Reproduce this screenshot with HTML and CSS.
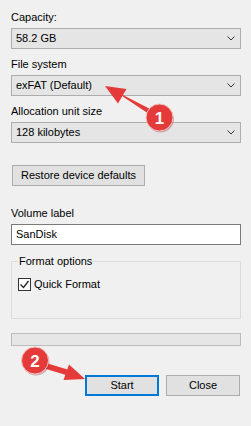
FILE: index.html
```html
<!DOCTYPE html>
<html>
	<head>
		<meta charset="UTF-8">
		<title>Format</title>
		<link rel="stylesheet" href="styles.css">
	</head>
	<body>
		<div class="dialog">
			<div class="field">
				<div class="lbl">Capacity:</div>
				<div class="combo">
					<span>58.2 GB</span>
					<svg class="chev" width="8" height="5" viewBox="0 0 8 5"><polyline points="0.5,0.5 4,4 7.5,0.5" fill="none" stroke="#333" stroke-width="1"/></svg>
				</div>
			</div>
			<div class="field">
				<div class="lbl">File system</div>
				<div class="combo">
					<span>exFAT (Default)</span>
					<svg class="chev" width="8" height="5" viewBox="0 0 8 5"><polyline points="0.5,0.5 4,4 7.5,0.5" fill="none" stroke="#333" stroke-width="1"/></svg>
				</div>
			</div>
			<div class="field">
				<div class="lbl">Allocation unit size</div>
				<div class="combo">
					<span>128 kilobytes</span>
					<svg class="chev" width="8" height="5" viewBox="0 0 8 5"><polyline points="0.5,0.5 4,4 7.5,0.5" fill="none" stroke="#333" stroke-width="1"/></svg>
				</div>
			</div>
			<div class="btn restore">Restore device defaults</div>
			<div class="field vol">
				<div class="lbl">Volume label</div>
				<div class="textbox">SanDisk</div>
			</div>
			<fieldset class="options">
				<legend>Format options</legend>
				<div class="check">
					<span class="box">
						<svg width="11" height="11" viewBox="0 0 11 11"><polyline points="1.5,5.5 4.5,8.5 9.5,2" fill="none" stroke="#222" stroke-width="1.3"/></svg>
					</span>
					<span>Quick Format</span>
				</div>
			</fieldset>
			<div class="progress"></div>
			<div class="actions">
				<div class="btn start">Start</div>
				<div class="btn">Close</div>
			</div>
		</div>

		<!-- callouts -->
		<svg class="marks" width="251" height="426" viewBox="0 0 251 426">
			<g class="arrow">
				<polygon points="105,86 126.5,89 118,103.5"/>
				<polygon points="120,93.5 123.5,97 152,116 154,111"/>
			</g>
			<circle cx="160.5" cy="119" r="13.5" fill="#9a2a2a" opacity="0.35"/>
			<circle class="dot" cx="159.5" cy="117.5" r="13.5"/>
			<text class="num" x="159.5" y="123.5">1</text>

			<g class="arrow">
				<polygon points="85,379 69,364.5 63.5,380"/>
				<polygon points="46,363 46,369 66,375 67.5,369.5"/>
			</g>
			<circle cx="36" cy="362" r="13.5" fill="#9a2a2a" opacity="0.35"/>
			<circle class="dot" cx="35" cy="360.5" r="13.5"/>
			<text class="num" x="35" y="366.5">2</text>
		</svg>
	</body>
</html>
```

FILE: styles.css
```css
*{
	margin: 0;
	padding: 0;
	box-sizing: border-box;
}
body{
	background-color: #f0f0f0;
	font-family: "Liberation Sans", Arial, sans-serif;
	font-size: 11px;
	color: #000;
	position: relative;
}
.dialog{
	width: 251px;
	height: 426px;
	padding: 10px 10px 0 11px;
	display: flex;
	flex-direction: column;
}
.field{
	margin-bottom: 8px;
}
.lbl{
	line-height: 15px;
	margin-bottom: 3px;
}
.combo{
	height: 21px;
	border: 1px solid #adadad;
	background-color: #e5e5e5;
	display: flex;
	align-items: center;
	justify-content: space-between;
	padding: 0 5px 0 4px;
	line-height: 19px;
}
.chev{
	display: block;
}
.btn{
	height: 21px;
	border: 1px solid #adadad;
	background-color: #e1e1e1;
	text-align: center;
	line-height: 19px;
}
.restore{
	width: 133px;
	margin: 14px 0 0 1px;
}
.vol{
	margin-top: 20px;
	margin-bottom: 0;
}
.textbox{
	height: 21px;
	border: 1px solid #7a7a7a;
	background-color: #fff;
	padding-left: 4px;
	line-height: 19px;
}
.options{
	margin-top: 9px;
	border: 1px solid #dcdcdc;
	padding: 9px 6px 26px 6px;
}
.options legend{
	padding: 0 1px;
	line-height: 14px;
}
.check{
	display: flex;
	align-items: center;
	line-height: 15px;
}
.box{
	width: 13px;
	height: 13px;
	border: 1px solid #333;
	background-color: #fff;
	margin-right: 3px;
	display: flex;
	align-items: center;
	justify-content: center;
}
.box svg{
	display: block;
}
.progress{
	height: 13px;
	margin-top: 14px;
	border: 1px solid #bcbcbc;
	background-color: #e6e6e6;
}
.actions{
	margin-top: 29px;
	display: flex;
	justify-content: flex-end;
	gap: 7px;
	padding-right: 1px;
}
.actions .btn{
	width: 74px;
}
.actions .start{
	border: 2px solid #0078d7;
	line-height: 17px;
}
.marks{
	position: absolute;
	left: 0;
	top: 0;
	pointer-events: none;
}
.arrow polygon{
	fill: #e53a3a;
}
.dot{
	fill: #e53a3a;
	stroke: #f6c4c4;
	stroke-width: 1;
}
.num{
	fill: #fff;
	font-family: "Liberation Sans", Arial, sans-serif;
	font-weight: bold;
	font-size: 17px;
	text-anchor: middle;
}
```
